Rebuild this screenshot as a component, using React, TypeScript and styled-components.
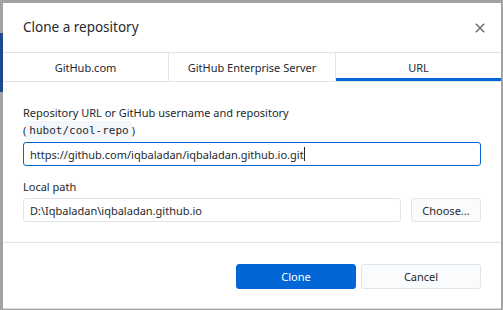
import styled, { createGlobalStyle } from 'styled-components';

const GlobalStyle = createGlobalStyle`
  html, body {
    margin: 0;
    padding: 0;
    background: #a3a3a3;
    overflow: hidden;
  }
  body {
    font-family: "Noto Sans", "Open Sans", sans-serif;
    color: #24292e;
  }
`;

const Backdrop = styled.div`
  display: flex;
  width: 503px;
  height: 310px;
  padding-top: 3px;
  box-sizing: border-box;
`;

const Strip = styled.div`
  width: 3px;
  display: flex;
  flex-direction: column;
`;

const StripPart = styled.div<{ $h: number; $c: string }>`
  height: ${(p) => p.$h}px;
  background: ${(p) => p.$c};
`;

const Dialog = styled.div`
  width: 498px;
  height: 306px;
  background: #fff;
  display: flex;
  flex-direction: column;
  border-bottom: 1px solid #dcdcdc;
  box-sizing: border-box;
`;

const Header = styled.div`
  height: 49px;
  display: flex;
  align-items: center;
  justify-content: space-between;
  padding: 0 15px 0 20px;
  border-bottom: 1px solid #e1e4e8;
`;

const Title = styled.h1`
  margin: 0 0 1px 0;
  font-size: 13.5px;
  font-weight: 400;
  color: #24292e;
`;

const CloseBtn = styled.button`
  border: 0;
  background: none;
  padding: 0;
  width: 12px;
  height: 12px;
  display: flex;
  align-items: center;
  justify-content: center;
`;

const Tabs = styled.div`
  display: grid;
  grid-template-columns: 165px 167px 1fr;
  height: 28px;
  border-bottom: 1px solid #e1e4e8;
`;

const Tab = styled.div<{ $active?: boolean }>`
  display: flex;
  align-items: center;
  justify-content: center;
  font-size: 11px;
  color: #24292e;
  border-left: 1px solid #e1e4e8;
  box-sizing: border-box;
  box-shadow: ${(p) => (p.$active ? 'inset 0 -3px 0 #0366d6' : 'none')};
  &:first-child {
    border-left: 0;
  }
`;

const Body = styled.div`
  padding: 22px 20px 0 20px;
  display: flex;
  flex-direction: column;
  height: 161px;
  box-sizing: border-box;
  border-bottom: 1px solid #e1e4e8;
`;

const Label = styled.div`
  font-size: 11px;
  line-height: 17px;
  color: #24292e;
`;

const Hint = styled.div`
  font-size: 11px;
  line-height: 19px;
  color: #24292e;
  margin-bottom: 2px;
`;

const Code = styled.code`
  display: inline-block;
  font-family: "DejaVu Sans Mono", "Liberation Mono", monospace;
  font-size: 11px;
  line-height: 19px;
  background: #f3f6fa;
  padding: 0 3px;
  border-radius: 3px;
  vertical-align: top;
`;

const Input = styled.div<{ $focus?: boolean }>`
  flex: 1;
  height: 24px;
  box-sizing: border-box;
  border: 1px solid ${(p) => (p.$focus ? '#0366d6' : '#e1e4e8')};
  border-radius: 3px;
  font-size: 11px;
  display: flex;
  align-items: center;
  padding: 0 6px;
  color: #24292e;
`;

const Caret = styled.span`
  display: inline-block;
  width: 1px;
  height: 14px;
  background: #24292e;
`;

const Row = styled.div<{ $mt?: number; $mb?: number }>`
  display: flex;
  gap: 10px;
  margin-top: ${(p) => p.$mt ?? 0}px;
  margin-bottom: ${(p) => p.$mb ?? 0}px;
`;

const Button = styled.button<{ $primary?: boolean; $w: number; $h?: number }>`
  width: ${(p) => p.$w}px;
  height: ${(p) => p.$h ?? 24}px;
  box-sizing: border-box;
  border-radius: 3px;
  font-family: inherit;
  font-size: 11px;
  border: 1px solid ${(p) => (p.$primary ? '#0366d6' : '#e1e4e8')};
  background: ${(p) => (p.$primary ? '#0366d6' : '#fafbfc')};
  color: ${(p) => (p.$primary ? '#fff' : '#24292e')};
  padding: 0;
`;

const Footer = styled.div`
  display: flex;
  justify-content: flex-end;
  gap: 5px;
  padding: 21px 20px 0 0;
`;

export default function App() {
  return (
    <>
      <GlobalStyle />
      <Backdrop>
        <Strip>
          <StripPart $h={30} $c="#a3a3a3" />
          <StripPart $h={59} $c="#1c4a8a" />
        </Strip>
        <Dialog>
          <Header>
            <Title>Clone a repository</Title>
            <CloseBtn aria-label="close">
              <svg width="10" height="10" viewBox="0 0 10 10">
                <path d="M0.8 0.8L9.2 9.2M9.2 0.8L0.8 9.2" stroke="#6a737d" strokeWidth="1.6" />
              </svg>
            </CloseBtn>
          </Header>
          <Tabs>
            <Tab>GitHub.com</Tab>
            <Tab>GitHub Enterprise Server</Tab>
            <Tab $active>URL</Tab>
          </Tabs>
          <Body>
            <Label>Repository URL or GitHub username and repository</Label>
            <Hint>
              (<Code>hubot/cool-repo</Code>)
            </Hint>
            <Row $mb={12}>
              <Input $focus>
                https://github.com/iqbaladan/iqbaladan.github.io.git
                <Caret />
              </Input>
            </Row>
            <Label>Local path</Label>
            <Row $mt={3}>
              <Input>D:\Iqbaladan\iqbaladan.github.io</Input>
              <Button $w={70}>Choose...</Button>
            </Row>
          </Body>
          <Footer>
            <Button $primary $w={120} $h={25}>Clone</Button>
            <Button $w={120} $h={25}>Cancel</Button>
          </Footer>
        </Dialog>
      </Backdrop>
    </>
  );
}
